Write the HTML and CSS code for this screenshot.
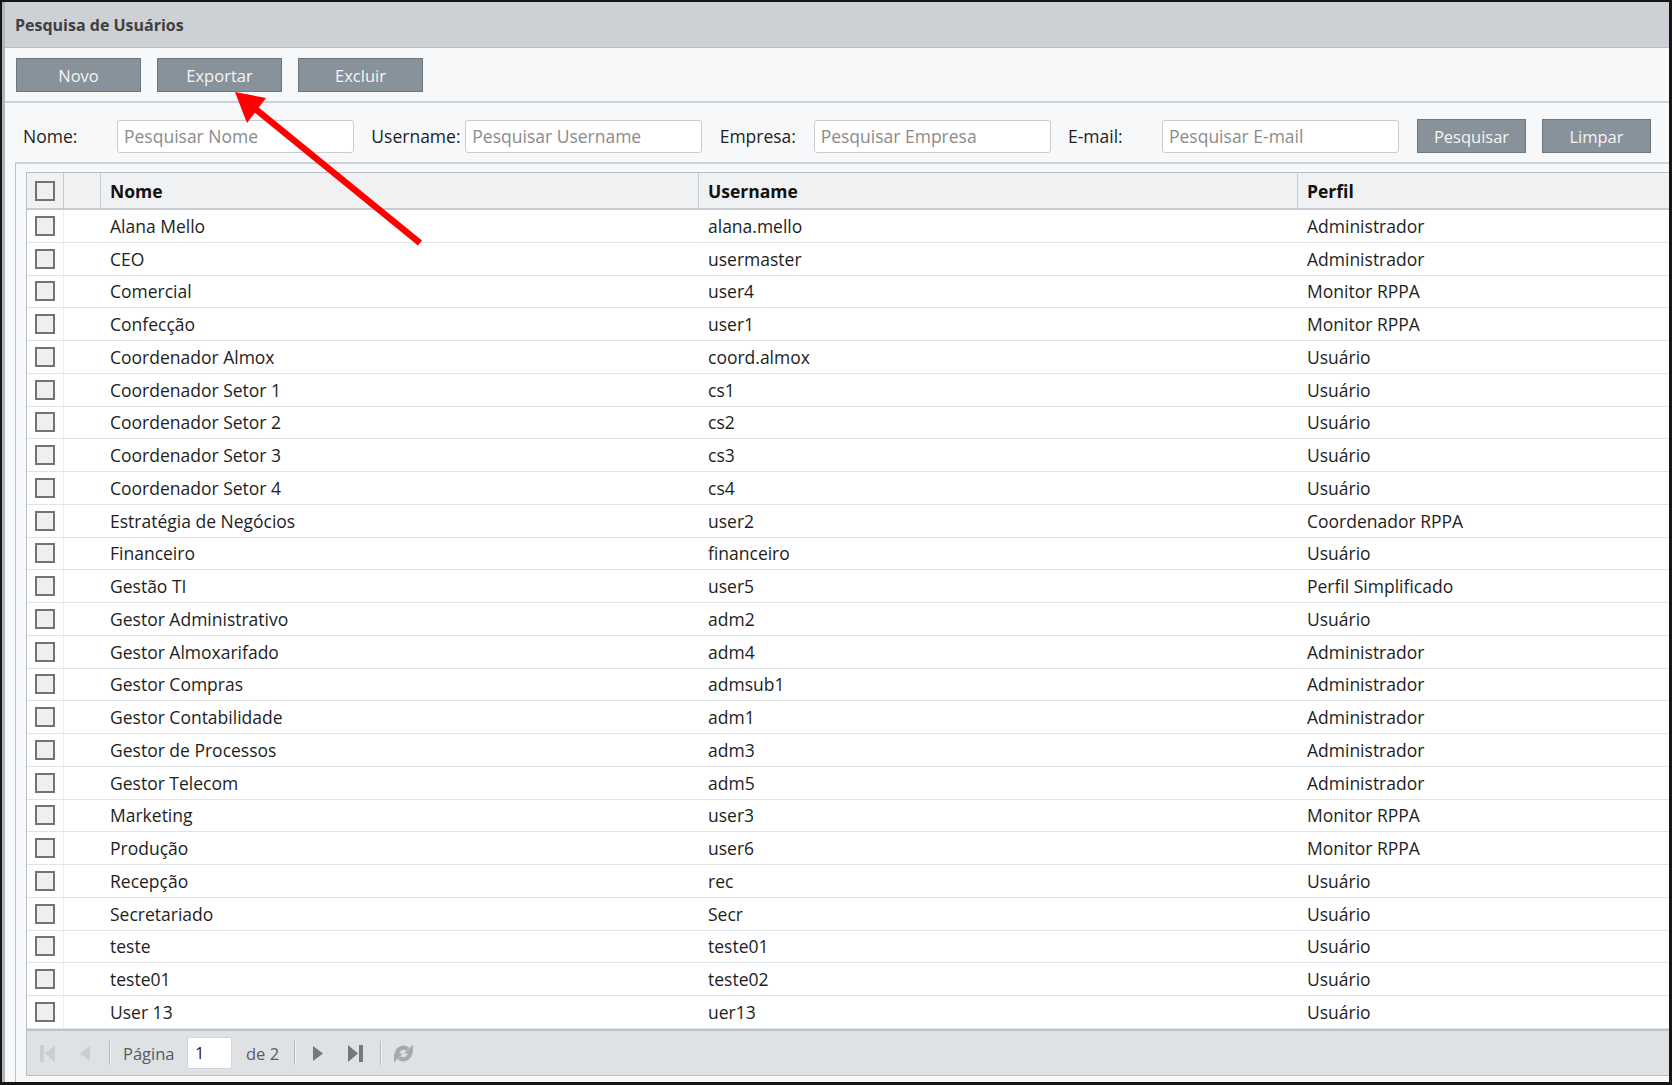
FILE: index.html
```html
<!doctype html>
<html>
  <head>
    <meta charset="utf-8">
    <title>Pesquisa de Usuários</title>
    <link rel="stylesheet" href="styles.css">
  </head>
  <body>
    <div class="frame">
      <div class="window">
        <div class="titlebar">Pesquisa de Usuários</div>
        <div class="toolbar">
          <span class="btn">Novo</span>
          <span class="btn">Exportar</span>
          <span class="btn">Excluir</span>
        </div>
        <div class="filters">
          <span class="label">Nome:</span>
          <span class="input">Pesquisar Nome</span>
          <span class="label">Username:</span>
          <span class="input">Pesquisar Username</span>
          <span class="label">Empresa:</span>
          <span class="input">Pesquisar Empresa</span>
          <span class="label">E-mail:</span>
          <span class="input">Pesquisar E-mail</span>
          <span class="btn small first">Pesquisar</span>
          <span class="btn small">Limpar</span>
        </div>
        <div class="body">
          <div class="grid">
            <div class="head">
              <span class="hcell check"><i class="box"></i></span>
              <span class="hcell"></span>
              <span class="hcell">Nome</span>
              <span class="hcell">Username</span>
              <span class="hcell">Perfil</span>
            </div>
            <div class="rows">
              <div class="row"><span class="check"><i class="box"></i></span><span></span><span class="cell">Alana Mello</span><span class="cell">alana.mello</span><span class="cell">Administrador</span></div>
              <div class="row"><span class="check"><i class="box"></i></span><span></span><span class="cell">CEO</span><span class="cell">usermaster</span><span class="cell">Administrador</span></div>
              <div class="row"><span class="check"><i class="box"></i></span><span></span><span class="cell">Comercial</span><span class="cell">user4</span><span class="cell">Monitor RPPA</span></div>
              <div class="row"><span class="check"><i class="box"></i></span><span></span><span class="cell">Confecção</span><span class="cell">user1</span><span class="cell">Monitor RPPA</span></div>
              <div class="row"><span class="check"><i class="box"></i></span><span></span><span class="cell">Coordenador Almox</span><span class="cell">coord.almox</span><span class="cell">Usuário</span></div>
              <div class="row"><span class="check"><i class="box"></i></span><span></span><span class="cell">Coordenador Setor 1</span><span class="cell">cs1</span><span class="cell">Usuário</span></div>
              <div class="row"><span class="check"><i class="box"></i></span><span></span><span class="cell">Coordenador Setor 2</span><span class="cell">cs2</span><span class="cell">Usuário</span></div>
              <div class="row"><span class="check"><i class="box"></i></span><span></span><span class="cell">Coordenador Setor 3</span><span class="cell">cs3</span><span class="cell">Usuário</span></div>
              <div class="row"><span class="check"><i class="box"></i></span><span></span><span class="cell">Coordenador Setor 4</span><span class="cell">cs4</span><span class="cell">Usuário</span></div>
              <div class="row"><span class="check"><i class="box"></i></span><span></span><span class="cell">Estratégia de Negócios</span><span class="cell">user2</span><span class="cell">Coordenador RPPA</span></div>
              <div class="row"><span class="check"><i class="box"></i></span><span></span><span class="cell">Financeiro</span><span class="cell">financeiro</span><span class="cell">Usuário</span></div>
              <div class="row"><span class="check"><i class="box"></i></span><span></span><span class="cell">Gestão TI</span><span class="cell">user5</span><span class="cell">Perfil Simplificado</span></div>
              <div class="row"><span class="check"><i class="box"></i></span><span></span><span class="cell">Gestor Administrativo</span><span class="cell">adm2</span><span class="cell">Usuário</span></div>
              <div class="row"><span class="check"><i class="box"></i></span><span></span><span class="cell">Gestor Almoxarifado</span><span class="cell">adm4</span><span class="cell">Administrador</span></div>
              <div class="row"><span class="check"><i class="box"></i></span><span></span><span class="cell">Gestor Compras</span><span class="cell">admsub1</span><span class="cell">Administrador</span></div>
              <div class="row"><span class="check"><i class="box"></i></span><span></span><span class="cell">Gestor Contabilidade</span><span class="cell">adm1</span><span class="cell">Administrador</span></div>
              <div class="row"><span class="check"><i class="box"></i></span><span></span><span class="cell">Gestor de Processos</span><span class="cell">adm3</span><span class="cell">Administrador</span></div>
              <div class="row"><span class="check"><i class="box"></i></span><span></span><span class="cell">Gestor Telecom</span><span class="cell">adm5</span><span class="cell">Administrador</span></div>
              <div class="row"><span class="check"><i class="box"></i></span><span></span><span class="cell">Marketing</span><span class="cell">user3</span><span class="cell">Monitor RPPA</span></div>
              <div class="row"><span class="check"><i class="box"></i></span><span></span><span class="cell">Produção</span><span class="cell">user6</span><span class="cell">Monitor RPPA</span></div>
              <div class="row"><span class="check"><i class="box"></i></span><span></span><span class="cell">Recepção</span><span class="cell">rec</span><span class="cell">Usuário</span></div>
              <div class="row"><span class="check"><i class="box"></i></span><span></span><span class="cell">Secretariado</span><span class="cell">Secr</span><span class="cell">Usuário</span></div>
              <div class="row"><span class="check"><i class="box"></i></span><span></span><span class="cell">teste</span><span class="cell">teste01</span><span class="cell">Usuário</span></div>
              <div class="row"><span class="check"><i class="box"></i></span><span></span><span class="cell">teste01</span><span class="cell">teste02</span><span class="cell">Usuário</span></div>
              <div class="row"><span class="check"><i class="box"></i></span><span></span><span class="cell">User 13</span><span class="cell">uer13</span><span class="cell">Usuário</span></div>
            </div>
            <div class="paging">
              <svg class="pg-first" width="15" height="17" viewBox="0 0 15 17"><rect x="0" y="0" width="4" height="17" fill="#c9ced2"/><path d="M15 0V17L5 8.5Z" fill="#c9ced2"/></svg>
              <svg class="pg-prev" width="10" height="15" viewBox="0 0 10 15"><path d="M10 0V15L0 7.5Z" fill="#c9ced2"/></svg>
              <span class="sep"></span>
              <span class="pg-text page">Página</span>
              <span class="pg-input">1</span>
              <span class="pg-text of">de 2</span>
              <span class="sep"></span>
              <svg class="pg-next" width="10" height="15" viewBox="0 0 10 15"><path d="M0 0V15L10 7.5Z" fill="#71787e"/></svg>
              <svg class="pg-last" width="15" height="17" viewBox="0 0 15 17"><path d="M0 0V17L10 8.5Z" fill="#71787e"/><rect x="11" y="0" width="4" height="17" fill="#71787e"/></svg>
              <span class="sep"></span>
              <svg class="pg-refresh" width="21" height="21" viewBox="0 0 20 20"><g fill="none" stroke="#a3aab0" stroke-width="4"><path d="M4 11a6 6 0 0 1 10-5"/><path d="M16 9a6 6 0 0 1-10 5"/></g><path d="M19 1.5V10H10.5Z" fill="#a3aab0"/><path d="M1 18.5V10H9.5Z" fill="#a3aab0"/></svg>
            </div>
          </div>
        </div>
      </div>
    </div>
    <svg class="arrow" width="1672" height="1085" viewBox="0 0 1672 1085">
      <line x1="420" y1="243" x2="253" y2="107" stroke="#ff0000" stroke-width="6.5"/>
      <path d="M235 92L266 98L247 123Z" fill="#ff0000"/>
    </svg>
  </body>
</html>
```

FILE: styles.css
```css
* {
  box-sizing: border-box;
}
html,
body {
  margin: 0;
  padding: 0;
}
body {
  width: 1672px;
  height: 1085px;
  overflow: hidden;
  font-family: "Open Sans", sans-serif;
  font-size: 17.5px;
  color: #1e1e1e;
  background: #fff;
}
.frame {
  height: 1085px;
  display: flex;
  flex-direction: column;
  border: 2px solid #161616;
  border-right-width: 3px;
  border-bottom-width: 3px;
  overflow: hidden;
}
.window {
  flex: 1;
  min-height: 0;
  display: flex;
  flex-direction: column;
  border-left: 3px solid #b0b5b9;
  background: #f7f8f9;
}
.titlebar {
  flex: none;
  height: 46px;
  display: flex;
  align-items: center;
  padding: 1px 0 0 10px;
  background: #cdd1d5;
  border-bottom: 1px solid #b9bec3;
  color: #404040;
  font-weight: 700;
  font-size: 16px;
}
.toolbar {
  flex: none;
  height: 55px;
  display: flex;
  align-items: flex-start;
  gap: 16px;
  padding: 10px 0 0 11px;
  border-bottom: 2px solid #cfd3d7;
}
.btn {
  flex: none;
  width: 125px;
  height: 34px;
  display: flex;
  align-items: center;
  justify-content: center;
  background: #88929b;
  border: 1px solid #6d7780;
  color: #f5f5f5;
  font-size: 16.5px;
}
.btn.small {
  width: 109px;
  margin-left: 16px;
}
.btn.small.first {
  margin-left: 18px;
}
.filters {
  flex: none;
  height: 59px;
  display: flex;
  align-items: flex-start;
  padding: 16px 0 0 18px;
}
.label {
  flex: none;
  width: 94px;
  line-height: 34px;
  white-space: nowrap;
}
.input + .label {
  margin-left: 17.33px;
}
.input {
  flex: none;
  width: 237px;
  height: 33px;
  margin-top: 1px;
  padding-left: 6px;
  line-height: 31px;
  background: #fff;
  border: 1px solid #c9cccf;
  border-radius: 3px;
  color: #8b8b8b;
  white-space: nowrap;
}
.body {
  flex: 1;
  min-height: 0;
  display: flex;
  margin-left: 10px;
  padding: 8px 0 6px 10px;
  border-top: 2px solid #cfd3d7;
  border-left: 1px solid #bcc1c6;
}
.grid {
  flex: 1;
  min-width: 0;
  display: flex;
  flex-direction: column;
  overflow: hidden;
  background: #fff;
  border: 1px solid #b8bec4;
  border-right: none;
}
.head,
.row {
  display: grid;
  grid-template-columns: 37px 37px 598px 599px 599px;
}
.head {
  flex: none;
  height: 37px;
  background: #eff1f3;
  border-bottom: 2px solid #c6cbd0;
}
.hcell {
  display: flex;
  align-items: center;
  padding-left: 9px;
  border-right: 1px solid #c9ced3;
  font-weight: 700;
  color: #111;
}
.rows {
  flex: 1;
}
.row {
  height: 32.76px;
  align-items: center;
  border-bottom: 1px solid #e1e4e7;
}
.cell {
  padding-left: 9px;
  white-space: nowrap;
}
.check {
  height: 100%;
  display: flex;
  align-items: center;
  justify-content: center;
  padding: 0;
  border-right: 1px solid #eceef0;
}
.hcell.check {
  border-right-color: #c9ced3;
}
.box {
  width: 20px;
  height: 20px;
  background: #efefef;
  border: 2px solid #737373;
}
.paging {
  flex: none;
  height: 46px;
  display: flex;
  align-items: center;
  padding-left: 13px;
  background: #dee2e5;
  border-top: 2px solid #bdc3c9;
  color: #555c62;
  font-size: 16.5px;
}
.paging svg {
  flex: none;
  display: block;
}
.pg-prev {
  margin-left: 25px;
}
.sep {
  flex: none;
  width: 2px;
  height: 24px;
  margin-left: 19px;
  border-left: 1px solid #b3b9bf;
  border-right: 1px solid #f2f4f5;
}
.pg-text {
  flex: none;
  white-space: nowrap;
}
.page {
  width: 50px;
  margin-left: 12px;
}
.pg-input {
  flex: none;
  width: 45px;
  height: 32px;
  margin-left: 14px;
  padding-left: 7px;
  line-height: 30px;
  background: #fff;
  border: 1px solid #d2d6da;
  border-radius: 2px;
  color: #222;
}
.of {
  width: 32px;
  margin-left: 14px;
}
.of + .sep {
  margin-left: 16px;
}
.pg-next {
  margin-left: 17px;
}
.pg-last {
  margin-left: 25px;
}
.pg-last + .sep {
  margin-left: 17px;
}
.pg-refresh {
  margin-left: 11px;
}
.arrow {
  position: absolute;
  left: 0;
  top: 0;
  pointer-events: none;
}
```
